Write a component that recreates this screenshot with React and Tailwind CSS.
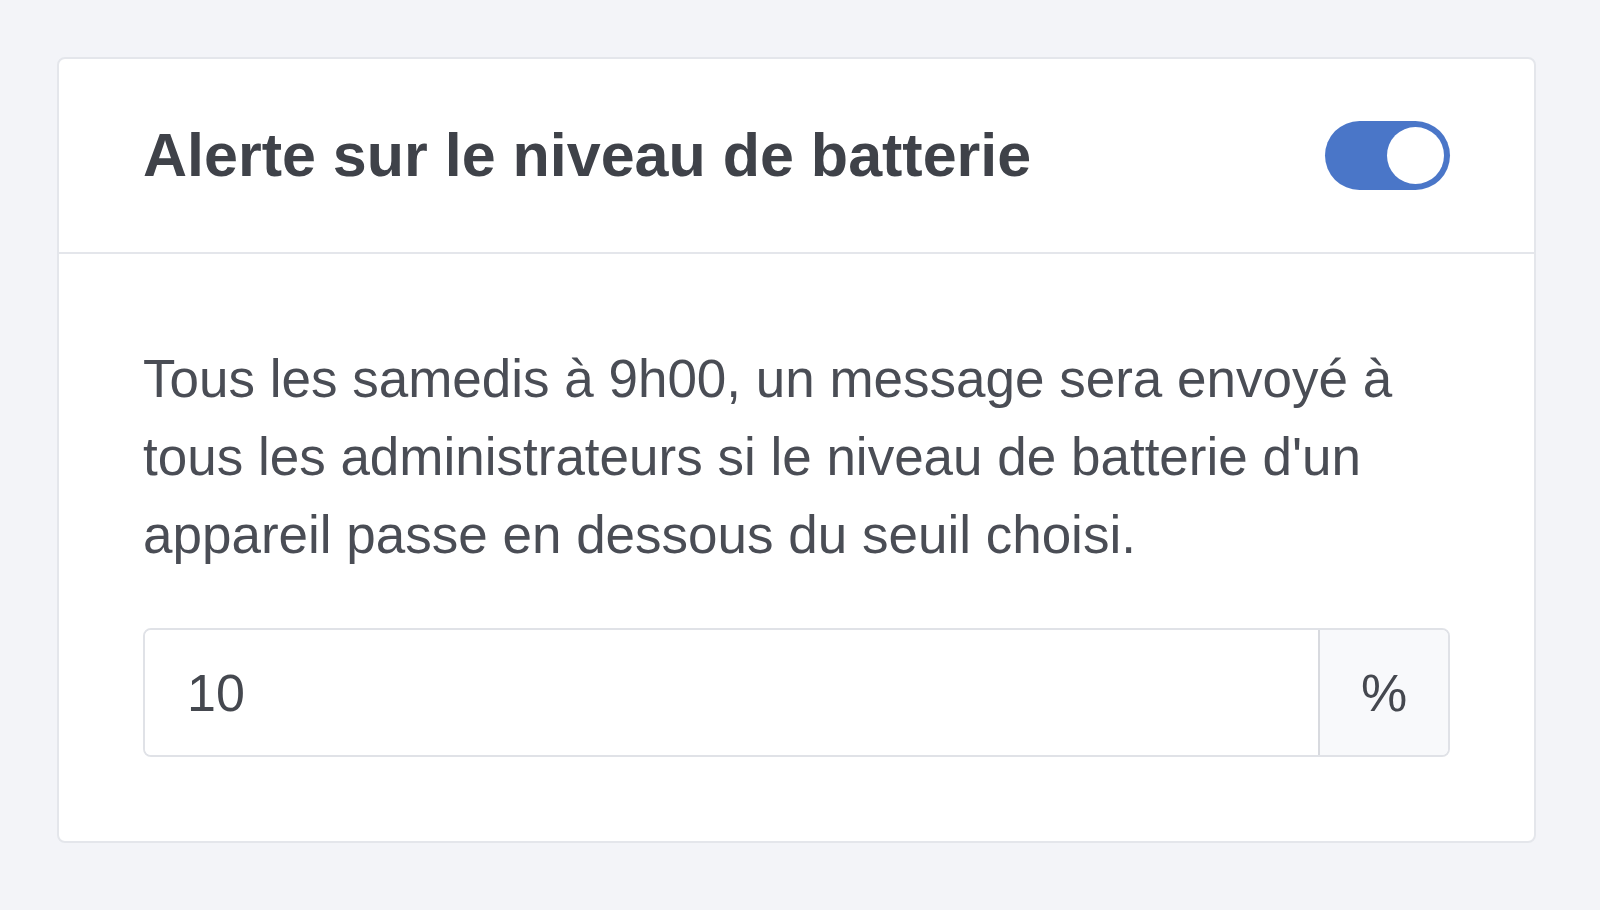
import React, { useState } from 'react';

export default function App() {
  const [enabled, setEnabled] = useState(true);
  const [threshold, setThreshold] = useState('10');

  return (
    <div className="min-h-[910px] bg-[#f3f4f8] pl-[57px] pr-[64px] pt-[57px] pb-[67px] font-['Liberation_Sans',Arial,sans-serif]">
      <div className="rounded-[8px] border-2 border-[#e4e6eb] bg-white">
        <div className="flex h-[195px] items-center justify-between border-b-2 border-[#e4e6eb] px-[84px]">
          <h2 className="text-[61px] font-bold leading-none text-[#3f4249]">
            Alerte sur le niveau de batterie
          </h2>
          <button
            type="button"
            onClick={() => setEnabled(!enabled)}
            className={`flex h-[69px] w-[125px] items-center rounded-full p-[6px] ${enabled ? 'justify-end bg-[#4a76c8]' : 'justify-start bg-[#d6d9df]'}`}
            aria-pressed={enabled}
          >
            <span className="block h-[57px] w-[57px] rounded-full bg-white" />
          </button>
        </div>
        <div className="px-[84px] pt-[86px] pb-[84px]">
          <p className="text-[53px] leading-[78px] text-[#4a4d55]">
            Tous les samedis à 9h00, un message sera envoyé à tous les administrateurs si le niveau de batterie d'un appareil passe en dessous du seuil choisi.
          </p>
          <div className="mt-[54px] flex h-[129px] overflow-hidden rounded-[8px] border-2 border-[#e0e2e7]">
            <input
              value={threshold}
              onChange={(e) => setThreshold(e.target.value)}
              className="min-w-0 flex-1 bg-white px-[42px] text-[52px] text-[#45484f] outline-none"
            />
            <span className="flex w-[130px] items-center justify-center border-l-2 border-[#d8dadf] bg-[#f8f9fb] text-[52px] text-[#45484f]">
              %
            </span>
          </div>
        </div>
      </div>
    </div>
  );
}
